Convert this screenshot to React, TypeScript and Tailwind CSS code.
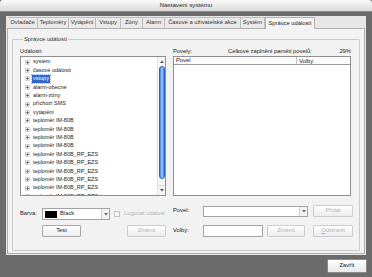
const tabs = [
  { label: 'Ovladače', w: 'w-[30px]' },
  { label: 'Teploměry', w: 'w-[31px]' },
  { label: 'Vytápění', w: 'w-[27px]' },
  { label: 'Vstupy', w: 'w-[25px]' },
  { label: 'Zóny', w: 'w-[22px]' },
  { label: 'Alarm', w: 'w-[22px]' },
  { label: 'Časové a uživatelské akce', w: 'w-[76px]' },
  { label: 'Systém', w: 'w-[24px]' },
];

const events = [
  'systém',
  'časové události',
  'vstupy',
  'alarm-obecné',
  'alarm-zóny',
  'příchozí SMS',
  'vytápění',
  'teploměr IM-80B',
  'teploměr IM-80B',
  'teploměr IM-80B',
  'teploměr IM-80B',
  'teploměr IM-80B_RP_EZS',
  'teploměr IM-80B_RP_EZS',
  'teploměr IM-80B_RP_EZS',
  'teploměr IM-80B_RP_EZS',
  'teploměr IM-80B_RP_EZS',
  'teploměr IM-80B_RP_EZS',
];

function Plus() {
  return (
    <svg width="5" height="5" viewBox="0 0 5 5" className="shrink-0">
      <rect x="0.5" y="0.5" width="4" height="4" fill="#fff" stroke="#b8b8b8" strokeWidth="0.6" />
      <path d="M1.2 2.5h2.6M2.5 1.2v2.6" stroke="#333" strokeWidth="0.7" />
    </svg>
  );
}

function Btn({
  children,
  w,
  disabled,
}: {
  children: React.ReactNode;
  w: string;
  disabled?: boolean;
}) {
  return (
    <div
      className={`${w} flex h-[12px] shrink-0 items-center justify-center rounded-[1px] border border-[#a9a9a9] bg-gradient-to-b from-[#ffffff] to-[#ececec] text-[5.8px] ${
        disabled ? 'border-[#cdcdcd] text-[#b4b4b4]' : 'text-[#222]'
      }`}
    >
      {children}
    </div>
  );
}

function DropArrow() {
  return (
    <div className="ml-auto flex h-full w-[8px] items-center justify-center border-l border-[#d0d0d0] bg-[#f3f3f3]">
      <svg width="4" height="3" viewBox="0 0 4 3">
        <path d="M0 0h4L2 2.5z" fill="#666" />
      </svg>
    </div>
  );
}

export default function App() {
  return (
    <div className="flex h-[277px] w-[372px] flex-col overflow-hidden bg-[#6b6b6b] font-['Liberation_Sans',Arial,sans-serif] text-[5.8px] leading-none text-[#222]">
      <div className="flex h-[12px] shrink-0 items-center justify-center rounded-t-[3px] border-b border-[#8a8a8a] bg-gradient-to-b from-[#fbfbfb] to-[#d9d9d9] text-[6.2px] text-[#262626]">
        Nastavení systému
      </div>

      <div className="mx-[6px] mt-[4px] flex h-[239px] shrink-0 flex-col bg-[#e7e7e7]">
        <div className="flex h-[12px] items-end pl-[2px]">
          {tabs.map((t) => (
            <div
              key={t.label}
              className={`${t.w} flex h-[11px] items-center justify-center border-r border-t border-[#bdbdbd] bg-[#e9e9e9] text-[5.8px] text-[#333]`}
            >
              {t.label}
            </div>
          ))}
          <div className="relative top-[1px] flex h-[12px] w-[50px] items-center justify-center border-x border-t border-[#b0b0b0] bg-[#f4f4f4] text-[5.8px] text-[#222]">
            Správce událostí
          </div>
        </div>

        <div className="mx-[1px] mb-[1px] flex-1 border border-[#b0b0b0] bg-[#f2f2f2] px-[4px] pb-[2px] pt-[7px]">
          <fieldset className="h-[215px] rounded-[1px] border border-[#cacaca] pl-[7px] pr-[6px]">
            <legend className="ml-[3px] px-[1px] text-[5.8px] leading-[7px] text-[#333]">
              Správce událostí
            </legend>
            <div className="mt-[5px] flex gap-[7px]">
              <div className="flex w-[146px] flex-col">
                <div className="h-[8px] leading-[6px]">Události:</div>
                <div className="flex h-[140px] border border-[#8f8f8f] bg-white">
                  <div className="flex flex-1 flex-col overflow-hidden pl-[4px] pt-[1px] text-[5.5px] text-[#1a1a1a]">
                    {events.map((e, i) => (
                      <div key={i} className="flex h-[8.4px] shrink-0 items-center gap-[2px]">
                        <Plus />
                        {i === 2 ? (
                          <span className="bg-[#3165c6] px-[1px] py-[1px] text-white outline outline-[0.5px] outline-dotted outline-[#9bb4e6]">
                            {e}
                          </span>
                        ) : (
                          <span className="px-[1px]">{e}</span>
                        )}
                      </div>
                    ))}
                  </div>
                  <div className="flex w-[8px] flex-col border-l border-[#e2e2e2] bg-[#f6f6f6]">
                    <div className="flex h-[8px] items-center justify-center">
                      <svg width="4" height="3" viewBox="0 0 4 3">
                        <path d="M0 3h4L2 0.5z" fill="#555" />
                      </svg>
                    </div>
                    <div className="mx-auto mt-[1px] h-[113px] w-[6px] rounded-full border border-[#2b62c4] bg-gradient-to-r from-[#3a78dc] via-[#a6d0ff] to-[#3a78dc]" />
                    <div className="flex-1" />
                    <div className="mb-[1px] flex h-[9px] items-center justify-center border-t border-[#dcdcdc]">
                      <svg width="4" height="3" viewBox="0 0 4 3">
                        <path d="M0 0h4L2 2.5z" fill="#555" />
                      </svg>
                    </div>
                  </div>
                </div>

                <div className="mt-[12px] flex h-[12px] items-center">
                  <div className="w-[22px]">Barva:</div>
                  <div className="flex h-[12px] w-[68px] items-center border border-[#a3a3a3] bg-white">
                    <div className="ml-[2px] h-[7px] w-[12px] bg-black" />
                    <span className="ml-[3px]">Black</span>
                    <DropArrow />
                  </div>
                  <div className="ml-[4px] h-[6px] w-[6px] border border-[#c4c4c4] bg-[#f7f7f7]" />
                  <span className="ml-[4px] text-[#b2b2b2]">Logovat událost</span>
                </div>

                <div className="mt-[5px] flex items-center pl-[22px]">
                  <Btn w="w-[39px]">Test</Btn>
                  <div className="ml-auto">
                    <Btn w="w-[39px]" disabled>
                      Změnit
                    </Btn>
                  </div>
                </div>
              </div>

              <div className="flex w-[180px] flex-col">
                <div className="flex h-[8px] pr-[2px] leading-[6px]">
                  <span className="w-[55px]">Povely:</span>
                  <span>Celkové zaplnění paměti povelů:</span>
                  <span className="ml-auto">29%</span>
                </div>
                <div className="flex h-[140px] w-[178px] flex-col border border-[#8f8f8f] bg-white">
                  <div className="flex h-[8px] items-center border-b border-[#9a9a9a] bg-[#fbfbfb]">
                    <span className="w-[122px] pl-[2px]">Povel</span>
                    <span className="h-full border-l border-[#c4c4c4] pl-[2px] leading-[8px]">Volby</span>
                  </div>
                </div>

                <div className="mt-[9px] flex h-[12px] items-center">
                  <div className="w-[30px]">Povel:</div>
                  <div className="flex h-[11px] w-[105px] items-center border border-[#a3a3a3] bg-white">
                    <DropArrow />
                  </div>
                  <div className="ml-[5px]">
                    <Btn w="w-[40px]" disabled>
                      Přidat
                    </Btn>
                  </div>
                </div>

                <div className="mt-[8px] flex h-[12px] items-center">
                  <div className="w-[30px]">Volby:</div>
                  <div className="h-[12px] w-[60px] border border-[#a3a3a3] bg-white" />
                  <div className="ml-[4px]">
                    <Btn w="w-[38px]" disabled>
                      Změnit
                    </Btn>
                  </div>
                  <div className="ml-auto">
                    <Btn w="w-[40px]" disabled>
                      <span className="underline">O</span>dstranit
                    </Btn>
                  </div>
                </div>
              </div>
            </div>
          </fieldset>
        </div>
      </div>

      <div className="flex flex-1 items-start justify-end pr-[5px] pt-[4px]">
        <div className="flex h-[14px] w-[40px] items-center justify-center rounded-[1px] border border-[#8a8a8a] bg-gradient-to-b from-[#ffffff] to-[#e8e8e8] text-[5.8px] text-[#111]">
          Zavřít
        </div>
      </div>
    </div>
  );
}
